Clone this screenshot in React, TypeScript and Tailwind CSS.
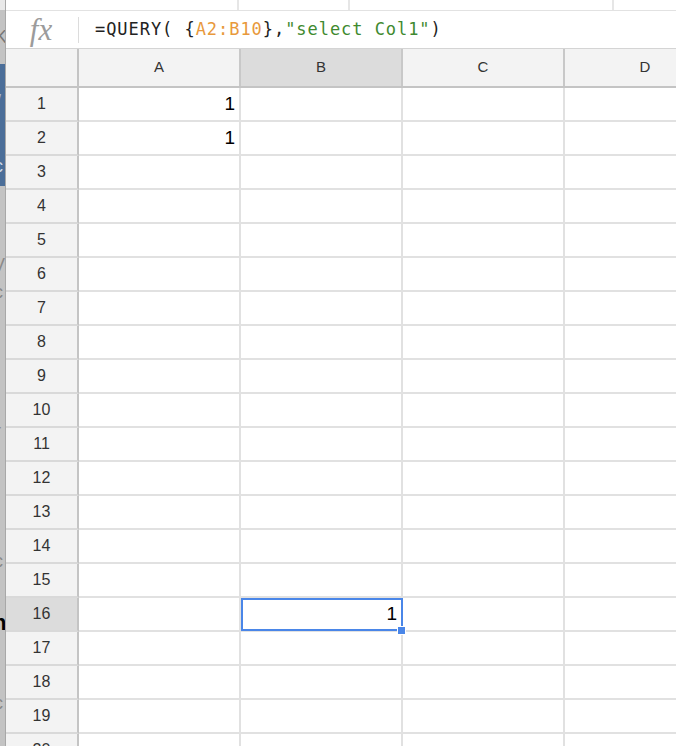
import React from "react";

const columns = ["A", "B", "C", "D"];
const rows = Array.from({ length: 20 }, (_, i) => i + 1);

const values: Record<string, string> = {
  "A1": "1",
  "A2": "1",
  "B16": "1",
};

const LeftEdge = () => (
  <div className="relative w-[6px] shrink-0 overflow-hidden bg-[#c3c3c3] border-r border-[#a8a8a8]">
    <div className="h-[10px] bg-[#e9e9e9]" />
    <div className="mt-[54px] h-[122px] bg-[#4b6e99]" />
    {/* bits of the window behind */}
    <span className="absolute left-[-5px] top-[28px] text-[18px] leading-none text-[#777] font-['Liberation_Sans',sans-serif]">K</span>
    <span className="absolute left-[-4px] top-[92px] text-[18px] leading-none text-[#a8bcd6] font-['Liberation_Sans',sans-serif]">/</span>
    <span className="absolute left-[-6px] top-[157px] text-[18px] leading-none text-[#c9d6e6] font-['Liberation_Sans',sans-serif]">c</span>
    <span className="absolute left-[-7px] top-[256px] text-[18px] leading-none text-[#8a8a8a] font-['Liberation_Sans',sans-serif]">V</span>
    <span className="absolute left-[-6px] top-[283px] text-[18px] leading-none text-[#8a8a8a] font-['Liberation_Sans',sans-serif]">c</span>
    <span className="absolute left-[-5px] top-[422px] text-[18px] leading-none text-[#8a8a8a] font-['Liberation_Sans',sans-serif]">r</span>
    <span className="absolute left-[-6px] top-[552px] text-[18px] leading-none text-[#8a8a8a] font-['Liberation_Sans',sans-serif]">c</span>
    <span className="absolute left-[-7px] top-[612px] text-[22px] leading-none font-bold text-black font-['Liberation_Sans',sans-serif]">h</span>
    <span className="absolute left-[-6px] top-[694px] text-[18px] leading-none text-[#8a8a8a] font-['Liberation_Sans',sans-serif]">c</span>
  </div>
);

const FormulaBar = () => (
  <div className="flex shrink-0 flex-col">
    <div className="flex h-[11px] shrink-0 border-b border-[#e2e2e2] bg-white">
      <div className="w-[233px] border-r-2 border-[#e6e6e6]" />
      <div className="w-[111px] border-r-2 border-[#e6e6e6]" />
      <div className="w-[264px] border-r-2 border-[#e6e6e6]" />
    </div>
    <div className="flex h-[38px] shrink-0 items-center border-b border-[#d4d4d4] bg-white">
      <div className="flex w-[72px] items-center justify-center pr-[2px]">
        <span className="font-['Liberation_Serif',serif] text-[31px] italic leading-none text-[#9b9b9b]">
          fx
        </span>
      </div>
      <div className="h-[26px] w-px bg-[#dcdcdc]" />
      <div className="pl-[16px] pt-[1px] font-['DejaVu_Sans_Mono',monospace] text-[17px] tracking-[0.95px] text-[#222]">
        =QUERY( {"{"}
        <span className="text-[#e8993c]">A2:B10</span>
        {"},"}
        <span className="text-[#3f8a2f]">"select Col1"</span>)
      </div>
    </div>
  </div>
);

const HeaderRow = () => (
  <div className="flex h-[39px] shrink-0 border-b-2 border-[#c4c4c4]">
    <div className="w-[73px] shrink-0 border-r-2 border-[#c4c4c4] bg-[#f3f3f3]" />
    {columns.map((c) => (
      <div
        key={c}
        className={`flex w-[162px] shrink-0 items-center justify-center border-r-2 border-[#c8c8c8] text-[15px] text-[#333] font-['Liberation_Sans',sans-serif] ${
          c === "B" ? "bg-[#dcdcdc]" : "bg-[#f3f3f3]"
        }`}
      >
        {c}
      </div>
    ))}
  </div>
);

const Row = ({ n }: { n: number }) => (
  <div className="flex h-[34px] shrink-0">
    <div
      className={`flex w-[73px] shrink-0 items-center justify-center border-r-2 border-b-2 border-r-[#c4c4c4] border-b-[#d9d9d9] text-[16px] text-[#333] font-['Liberation_Sans',sans-serif] ${
        n === 16 ? "bg-[#dcdcdc]" : "bg-[#f3f3f3]"
      }`}
    >
      {n}
    </div>
    {columns.map((c) => {
      const key = `${c}${n}`;
      const selected = key === "B16";
      return (
        <div
          key={c}
          className={`relative flex w-[162px] shrink-0 items-center justify-end border-r-2 border-b-2 border-[#e1e1e1] bg-white pr-[4px] font-['Liberation_Sans',sans-serif] text-[19px] text-black ${
            selected ? "z-10" : ""
          }`}
        >
          {values[key]}
          {selected && (
            <>
              <div className="absolute bottom-[-1px] left-0 right-[-2px] top-0 border-2 border-[#4a86e8]" />
              <div className="absolute bottom-[-5px] right-[-5px] h-[9px] w-[9px] border border-white bg-[#4a86e8]" />
            </>
          )}
        </div>
      );
    })}
  </div>
);

export default function App() {
  return (
    <div className="flex h-[746px] w-[676px] overflow-hidden bg-white">
      <LeftEdge />
      <div className="flex min-w-0 flex-1 flex-col overflow-hidden">
        <FormulaBar />
        <HeaderRow />
        {rows.map((n) => (
          <Row key={n} n={n} />
        ))}
      </div>
    </div>
  );
}
